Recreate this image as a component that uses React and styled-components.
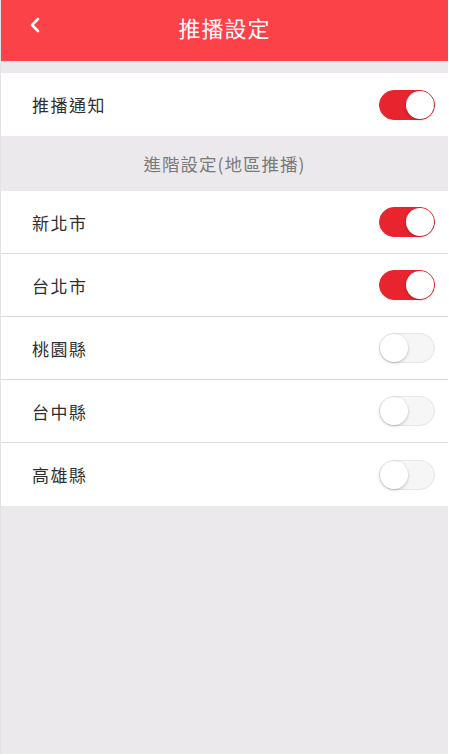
import React, { useState } from "react";
import styled, { createGlobalStyle } from "styled-components";

const GlobalStyle = createGlobalStyle`
  html, body {
    margin: 0;
    padding: 0;
    background: #ffffff;
  }
  body {
    font-family: "Noto Sans CJK TC", "Noto Sans", sans-serif;
  }
`;

const regions = [
  { name: "新北市", on: true },
  { name: "台北市", on: true },
  { name: "桃園縣", on: false },
  { name: "台中縣", on: false },
  { name: "高雄縣", on: false },
];

const App = () => {
  const [push, setPush] = useState(true);
  const [areas, setAreas] = useState(regions);

  const flip = (i) =>
    setAreas(areas.map((a, idx) => (idx === i ? { ...a, on: !a.on } : a)));

  return (
    <>
      <GlobalStyle />
      <Page>
        <Header>
          <BackButton aria-label="back">
            <svg width="14" height="18" viewBox="0 0 14 18">
              <path
                d="M10 3 L4 9 L10 15"
                fill="none"
                stroke="#fff"
                strokeWidth="2.6"
                strokeLinecap="round"
                strokeLinejoin="round"
              />
            </svg>
          </BackButton>
          <Title>推播設定</Title>
        </Header>
        <Spacer />
        <Row>
          <Label>推播通知</Label>
          <Switch on={push} onClick={() => setPush(!push)} />
        </Row>
        <SectionTitle>進階設定(地區推播)</SectionTitle>
        <List>
          {areas.map((a, i) => (
            <Row key={a.name} divided={i < areas.length - 1}>
              <Label>{a.name}</Label>
              <Switch on={a.on} onClick={() => flip(i)} />
            </Row>
          ))}
        </List>
        <Filler />
      </Page>
    </>
  );
};

const Page = styled.div`
  display: flex;
  flex-direction: column;
  width: 447px;
  height: 754px;
  background: #ebe9ec;
  border-left: 1px solid #e2e2e2;
`;

const Header = styled.div`
  position: relative;
  display: flex;
  align-items: center;
  justify-content: center;
  height: 61px;
  padding-bottom: 7px;
  box-sizing: border-box;
  background: #fb4248;
  flex-shrink: 0;
`;

const BackButton = styled.div`
  position: absolute;
  left: 27px;
  top: 16px;
  display: flex;
`;

const Title = styled.h1`
  margin: 0;
  color: #ffffff;
  font-size: 22px;
  font-weight: 400;
  letter-spacing: 1px;
`;

const Spacer = styled.div`
  height: 12px;
  background: #ebe9ec;
`;

const List = styled.div`
  display: flex;
  flex-direction: column;
  background: #ffffff;
`;

const Row = styled.div`
  display: flex;
  align-items: center;
  justify-content: space-between;
  height: ${(p) => (p.divided ? 62 : 63)}px;
  padding: 0 13px 0 31px;
  background: #ffffff;
  border-bottom: ${(p) => (p.divided ? "1px solid #dcdcdc" : "none")};
`;

const Label = styled.span`
  font-size: 17px;
  color: #2f2f2f;
  letter-spacing: 1.5px;
`;

const SectionTitle = styled.div`
  display: flex;
  align-items: center;
  justify-content: center;
  height: 55px;
  color: #7a7a7a;
  font-size: 17.5px;
  letter-spacing: 1px;
  background: #ebe9ec;
`;

const Switch = styled.div`
  position: relative;
  width: 56px;
  height: 30px;
  border-radius: 15px;
  cursor: pointer;
  box-sizing: border-box;
  background: ${(p) => (p.on ? "#e8242e" : "#f6f6f6")};
  border: 1px solid ${(p) => (p.on ? "#e8242e" : "#e6e6e6")};
  &::after {
    content: "";
    position: absolute;
    top: 0;
    left: ${(p) => (p.on ? "26px" : "0")};
    width: 28px;
    height: 28px;
    border-radius: 50%;
    background: #ffffff;
    box-shadow: 0 1px 3px rgba(0, 0, 0, 0.25);
  }
`;

const Filler = styled.div`
  flex: 1;
  background: #ebe9ec;
`;

export default App;
